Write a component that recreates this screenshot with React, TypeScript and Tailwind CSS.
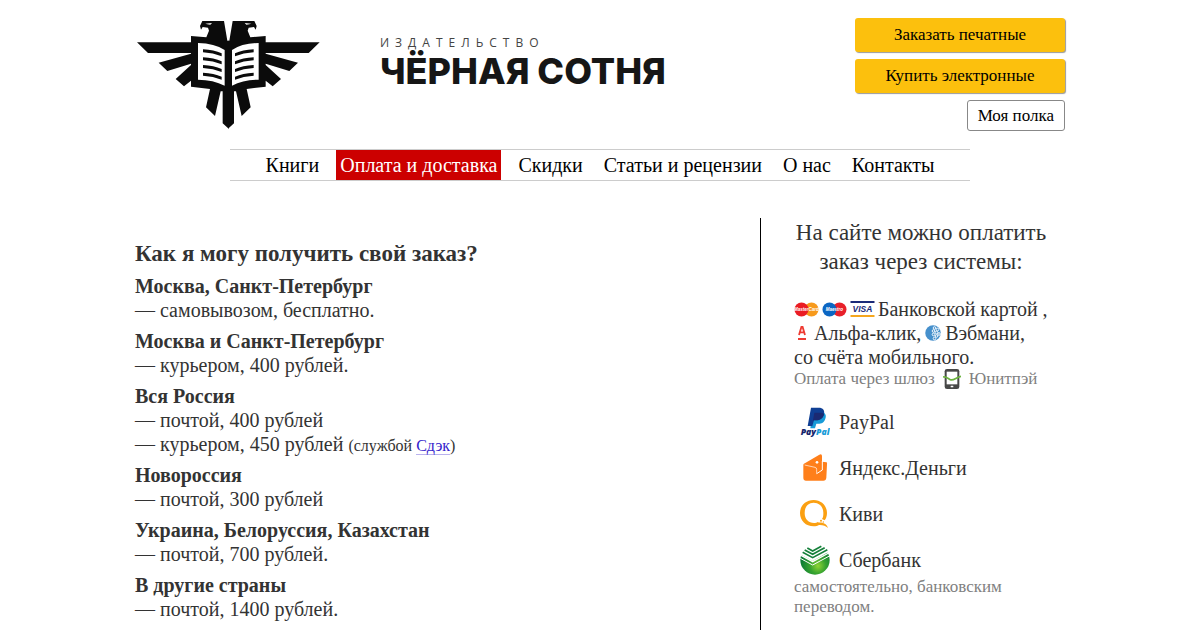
import type { ReactNode } from "react";

const navItems = [
  { label: "Книги", href: "#books" },
  { label: "Оплата и доставка", href: "#delivery", active: true },
  { label: "Скидки", href: "#discounts" },
  { label: "Статьи и рецензии", href: "#articles" },
  { label: "О нас", href: "#about" },
  { label: "Контакты", href: "#contacts" },
];

const deliveries: { place: string; lines: ReactNode[] }[] = [
  { place: "Москва, Санкт-Петербург", lines: ["— самовывозом, бесплатно."] },
  { place: "Москва и Санкт-Петербург", lines: ["— курьером, 400 рублей."] },
  {
    place: "Вся Россия",
    lines: [
      "— почтой, 400 рублей",
      <>
        — курьером, 450 рублей{" "}
        <span className="text-base leading-none">
          (службой{" "}
          <a href="#cdek" className="border-b border-[#b9b2ee] text-[#3322cc]">
            Сдэк
          </a>
          )
        </span>
      </>,
    ],
  },
  { place: "Новороссия", lines: ["— почтой, 300 рублей"] },
  {
    place: "Украина, Белоруссия, Казахстан",
    lines: ["— почтой, 700 рублей."],
  },
  { place: "В другие страны", lines: ["— почтой, 1400 рублей."] },
];

const EagleHalf = () => (
  <>
    <path
      fill="#0b0b0b"
      d="M217 33H282L292 92H296V356L278 340V244H272L255 318L228 292L240 237L183 230V212L162 229L137 207L183 165V161L112 183L86 158L183 131V129H54L21 97H183V78L229 82L237 62L234 53L218 51L213 59L210 48Z"
    />
    <path fill="#fff" d="M226 41L246 39L241 44L232 43Z" />
    <path fill="#fff" d="M204 99Q254 100 284 120V227Q250 209 204 209Z" />
    {[118, 142, 165, 188].map((y) => (
      <path
        key={y}
        fill="#0b0b0b"
        d={`M219 ${y}Q252 ${y + 2} 275 ${y + 12}V${y + 21}Q250 ${y + 11} 219 ${
          y + 9
        }Z`}
      />
    ))}
  </>
);

const EagleLogo = () => (
  <svg
    viewBox="15 24 555 336"
    className="h-[112px] w-[185px] shrink-0"
    aria-hidden="true"
  >
    <EagleHalf />
    <g transform="translate(590 0) scale(-1 1)">
      <EagleHalf />
    </g>
  </svg>
);

const CardCircles = ({
  left,
  right,
  name,
}: {
  left: string;
  right: string;
  name: string;
}) => (
  <svg viewBox="0 0 50 30" className="h-[15px] w-[25px]" aria-hidden="true">
    <circle cx="35" cy="15" r="14" fill={right} />
    <circle cx="15" cy="15" r="14" fill={left} />
    <text
      x="25"
      y="18"
      textAnchor="middle"
      fontSize="9"
      fontStyle="italic"
      fontWeight="700"
      fill="#fff"
      fontFamily="Liberation Sans, sans-serif"
    >
      {name}
    </text>
  </svg>
);

const Visa = () => (
  <svg viewBox="0 0 50 32" className="h-4 w-[25px]" aria-hidden="true">
    <path fill="#1a2a78" d="M1 0H49V4H1Z" />
    <path fill="#f5a61d" d="M1 28H49V32H1Z" />
    <text
      x="25"
      y="22"
      textAnchor="middle"
      fontSize="17"
      fontStyle="italic"
      fontWeight="700"
      fill="#1a2a78"
      fontFamily="Liberation Sans, sans-serif"
    >
      VISA
    </text>
  </svg>
);

const Alfa = () => (
  <svg viewBox="0 0 16 16" className="size-4" aria-hidden="true">
    <path
      fill="none"
      stroke="#ee3a31"
      strokeWidth="1.8"
      d="M5 10L7.4 2H8.6L11 10M5.8 7.4H10.2"
    />
    <path fill="#ee3a31" d="M4 13H12V15H4Z" />
  </svg>
);

const WebMoney = () => (
  <svg viewBox="0 0 32 32" className="size-4" aria-hidden="true">
    <circle cx="16" cy="16" r="15.5" fill="#4690cc" />
    <g fill="none" stroke="#fff" strokeWidth="1.8">
      <circle cx="19" cy="6" r="2.6" />
      <circle cx="25" cy="9" r="2.6" />
      <circle cx="17" cy="12" r="2.6" />
      <circle cx="23" cy="15" r="2.6" />
      <circle cx="28" cy="18" r="2.6" />
      <circle cx="17" cy="19" r="2.6" />
      <circle cx="23" cy="22" r="2.6" />
      <circle cx="19" cy="27" r="2.6" />
    </g>
  </svg>
);

const UnitPay = () => (
  <svg viewBox="0 0 54 60" className="h-5 w-[18px]" aria-hidden="true">
    <rect x="5" y="0" width="44" height="60" rx="7" fill="#484848" />
    <path fill="#fff" d="M11 8H43V46H11Z" />
    <rect x="23" y="50" width="8" height="5" rx="1" fill="#fff" />
    <path
      fill="none"
      stroke="#6cb33f"
      strokeWidth="5"
      d="M0 24C9 22 14 28 22 32C32 36 40 24 54 22"
    />
  </svg>
);

const PayPal = () => (
  <svg viewBox="0 0 90 90" className="size-[30px]" aria-hidden="true">
    <path
      fill="#179bd7"
      d="M38 14H62C76 16 80 24 76 35C73 46 65 50 54 50H49L45 64H31Z"
    />
    <path
      fill="#0f3f94"
      d="M33 2H56C69 2 75 10 72 22C69 35 60 40 48 40H42L37 57H23Z"
    />
    <path fill="#1b2a72" d="M43 17H63C69 18 71 20 72 22C69 35 60 40 48 40H39Z" />
    <text
      x="2"
      y="83"
      fontSize="26"
      fontStyle="italic"
      fontWeight="800"
      fill="#14246b"
      fontFamily="Open Sans, sans-serif"
    >
      Pay
      <tspan fill="#179bd7">Pal</tspan>
    </text>
  </svg>
);

const YandexMoney = () => (
  <svg viewBox="0 0 90 90" className="size-[30px]" aria-hidden="true">
    <path
      fill="#ff7f1a"
      d="M12 32L58 5Q66 2 66 9V26L80 28Q82 29 81 34L79 74Q78 83 70 83H17Q10 83 10 76V36Q10 33 12 32Z"
    />
    <path fill="none" stroke="#fff" strokeWidth="3" d="M50 62L67 51V24" />
    <path fill="none" stroke="#fff" strokeWidth="2" d="M14 36L45 43Q50 44 50 49V62" />
    <circle cx="51" cy="28" r="4" fill="#fff" />
  </svg>
);

const Qiwi = () => (
  <svg viewBox="0 0 90 90" className="size-[30px]" aria-hidden="true">
    <path
      fill="#fba012"
      fillRule="evenodd"
      d="M41 3C64 3 81 20 81 42C81 52 78 59 74 64L66 60C70 55 70 48 70 41C70 24 58 11 41 11C24 11 14 24 14 42C14 61 26 72 42 72C47 72 50 71 54 69L58 77C53 80 47 82 41 82C17 82 0 65 0 42C0 20 17 3 41 3Z"
    />
    <path fill="#fba012" d="M50 72C62 68 80 72 84 87C77 79 66 77 54 78Z" />
    <circle cx="63" cy="65" r="3" fill="#fba012" />
    <circle cx="70" cy="69" r="2" fill="#fba012" />
  </svg>
);

const Sberbank = () => (
  <svg viewBox="0 0 90 90" className="size-[30px]" aria-hidden="true">
    <defs>
      <radialGradient id="sber" cx="0.6" cy="0.7" r="0.6">
        <stop offset="0" stopColor="#8fd435" />
        <stop offset="0.45" stopColor="#36a32f" />
        <stop offset="1" stopColor="#0a7a35" />
      </radialGradient>
    </defs>
    <circle cx="45" cy="45" r="44" fill="url(#sber)" />
    <path fill="#fff" d="M0 0H90V16L84 22L38 48L0 28Z" />
    <g fill="none" stroke="#15803a" strokeWidth="5">
      <path d="M22 9L38 18L64 4" />
      <path d="M14 15L38 28L74 8" />
      <path d="M8 22L38 38L82 14" />
    </g>
    <path fill="none" stroke="#fff" strokeWidth="4" d="M3 31L38 50L86 24" />
    <path fill="none" stroke="#fff" strokeWidth="3" d="M1 40L38 60L90 32" />
  </svg>
);

const systems = [
  { name: "PayPal", icon: <PayPal /> },
  { name: "Яндекс.Деньги", icon: <YandexMoney /> },
  { name: "Киви", icon: <Qiwi /> },
  { name: "Сбербанк", icon: <Sberbank /> },
];

const Header = () => (
  <header className="flex items-start justify-between">
    <a href="#home" className="flex items-start gap-[60px]">
      <EagleLogo />
      <div className="flex flex-col pt-[17px] text-[#161616]">
        <span className="font-['Open_Sans',sans-serif] text-xs leading-4 tracking-[6px] text-[#444]">
          ИЗДАТЕЛЬСТВО
        </span>
        <span className="font-['Inter',sans-serif] text-[36px] leading-10 font-extrabold">
          ЧЁРНАЯ СОТНЯ
        </span>
      </div>
    </a>
    <div className="flex w-[210px] flex-col items-end gap-[7px] text-[17px] text-black">
      <button className="h-[34px] w-full rounded-[3px] bg-[#fcc00d] shadow-[1px_1px_1px_#999]">
        Заказать печатные
      </button>
      <button className="h-[34px] w-full rounded-[3px] bg-[#fcc00d] shadow-[1px_1px_1px_#999]">
        Купить электронные
      </button>
      <button className="h-[31px] rounded-[3px] border border-[#888] bg-white px-[10px]">
        Моя полка
      </button>
    </div>
  </header>
);

const Nav = () => (
  <nav className="mx-auto mt-[18px] flex w-full max-w-[740px] justify-center gap-[13px] border-y border-[#ccc] text-xl leading-[30px] text-black">
    {navItems.map(({ label, href, active }) => (
      <a
        key={label}
        href={href}
        className={active ? "bg-[#cc0000] px-1 text-white" : "px-1"}
      >
        {label}
      </a>
    ))}
  </nav>
);

const Payments = () => (
  <aside className="w-[305px] shrink-0 border-l border-black pb-8 pl-[33px] text-xl leading-6">
    <h2 className="max-w-[254px] text-center text-[23px] leading-[29px]">
      На сайте можно оплатить заказ через системы:
    </h2>
    <div className="mt-[21px] whitespace-nowrap">
      <p className="flex items-center gap-[3px]">
        <CardCircles left="#ea1c24" right="#f79a1c" name="MasterCard" />
        <CardCircles left="#0b66c3" right="#e8202a" name="Maestro" />
        <Visa />
        <span>Банковской картой ,</span>
      </p>
      <p className="flex items-center gap-1">
        <Alfa />
        <span>Альфа-клик,</span>
        <WebMoney />
        <span>Вэбмани,</span>
      </p>
      <p>со счёта мобильного.</p>
      <p className="flex items-center gap-2 text-[17px] leading-5 text-[#808080]">
        Оплата через шлюз
        <UnitPay />
        <span>Юнитпэй</span>
      </p>
    </div>
    <ul className="mt-[18px] flex flex-col gap-4">
      {systems.map(({ name, icon }) => (
        <li key={name} className="flex items-center gap-[9px] pl-[6px]">
          {icon}
          <span className="leading-[30px]">{name}</span>
        </li>
      ))}
    </ul>
    <p className="mt-[2px] text-[17px] leading-5 text-[#808080]">
      самостоятельно, банковским переводом.
    </p>
  </aside>
);

const App = () => {
  return (
    <div className="bg-white font-['Liberation_Serif',serif] text-[#333]">
      <div className="mx-auto w-full max-w-[930px] pt-[18px]">
        <Header />
        <Nav />
        <div className="mt-[37px] flex justify-between">
          <main className="pt-[22px] text-xl leading-6">
            <h1 className="text-[23px] leading-7 font-bold">
              Как я могу получить свой заказ?
            </h1>
            <div className="mt-[6px] flex flex-col gap-[7px]">
              {deliveries.map(({ place, lines }) => (
                <section key={place}>
                  <h3 className="font-bold">{place}</h3>
                  {lines.map((line, i) => (
                    <p key={i}>{line}</p>
                  ))}
                </section>
              ))}
            </div>
          </main>
          <Payments />
        </div>
      </div>
    </div>
  );
};

export default App;
